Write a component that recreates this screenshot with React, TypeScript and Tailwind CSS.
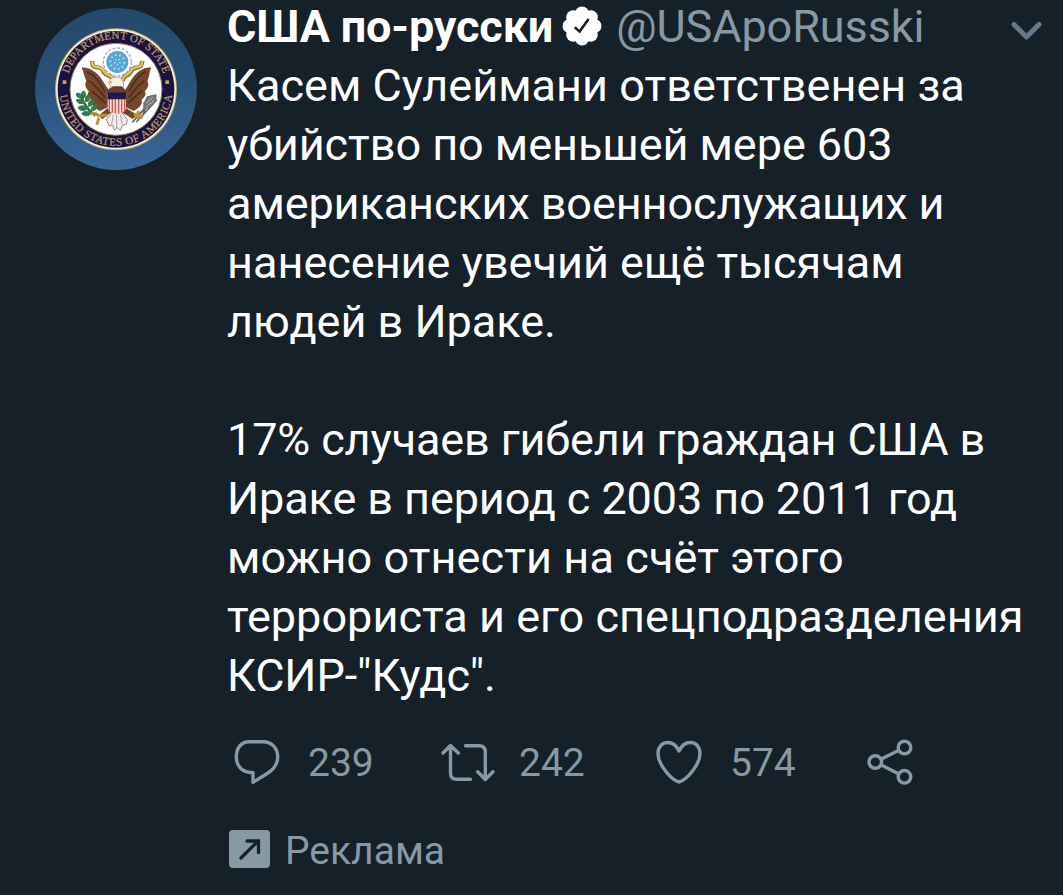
import type { ReactNode } from "react";

const paragraphs = [
    [
        { text: "Касем Сулеймани ответственен за", tracking: "tracking-[0.03px]" },
        { text: "убийство по меньшей мере 603", tracking: "tracking-[-0.04px]" },
        { text: "американских военнослужащих и", tracking: "tracking-[-0.1px]" },
        { text: "нанесение увечий ещё тысячам", tracking: "tracking-normal" },
        { text: "людей в Ираке.", tracking: "tracking-normal" },
    ],
    [
        { text: "17% случаев гибели граждан США в", tracking: "tracking-[-0.13px]" },
        { text: "Ираке в период с 2003 по 2011 год", tracking: "tracking-[-0.09px]" },
        { text: "можно отнести на счёт этого", tracking: "tracking-[0.11px]" },
        { text: "террориста и его спецподразделения", tracking: "tracking-[0.03px]" },
        { text: "КСИР-\"Кудс\".", tracking: "tracking-[-0.08px]" },
    ],
];

const Avatar = () => (
    <svg className="h-[162px] w-[162px] rounded-full" viewBox="28 24 486 486">
        <defs>
            <linearGradient id="sky" x1="0" y1="0" x2="0" y2="1">
                <stop offset="0" stopColor="#23486a" />
                <stop offset="0.5" stopColor="#2b527b" />
                <stop offset="1" stopColor="#386797" />
            </linearGradient>
            <path id="arcTop" d="M124 290 A149 149 0 1 1 418 290" />
            <path id="arcBottom" d="M103 250 A169 169 0 1 0 439 250" />
        </defs>
        <rect x="28" y="24" width="486" height="486" fill="url(#sky)" />
        <circle cx="271" cy="268" r="183" fill="#b9ad62" />
        <circle cx="271" cy="268" r="180" fill="#f4f2df" />
        <circle cx="271" cy="268" r="175" fill="#1c1140" />
        <circle cx="271" cy="268" r="138" fill="#fff" stroke="#8d8052" strokeWidth="3" />
        <g fill="#b8a067" fontFamily="'Liberation Serif', serif" fontSize="33" textAnchor="middle">
            <text stroke="#b8a067" strokeWidth="0.6">
                <textPath href="#arcTop" startOffset="50%" textLength="378">DEPARTMENT OF STATE</textPath>
            </text>
            <text stroke="#b8a067" strokeWidth="0.6">
                <textPath href="#arcBottom" startOffset="50%" textLength="496">UNITED STATES OF AMERICA</textPath>
            </text>
        </g>
        <rect x="111" y="241" width="11" height="11" fill="#c3a759" />
        <rect x="419" y="241" width="11" height="11" fill="#c3a759" />
        {/* glory above the eagle */}
        <circle cx="275" cy="186" r="42" fill="#fff" stroke="#aaa6ae" strokeWidth="4" strokeDasharray="9 5" />
        <circle cx="275" cy="186" r="33" fill="#50a7d1" />
        <circle cx="275" cy="186" r="21" fill="none" stroke="#b5e2f2" strokeWidth="6" strokeDasharray="5 8" />
        <circle cx="275" cy="186" r="8" fill="none" stroke="#b5e2f2" strokeWidth="5" strokeDasharray="4 6" />
        {/* wings */}
        <path d="M168 203 C190 201 214 216 228 238 L249 270 L249 320 L224 333 C207 327 193 309 199 300 C185 291 184 279 190 274 C178 264 177 251 182 244 C176 231 174 215 168 203Z" fill="#76472c" />
        <path d="M376 203 C354 201 332 216 318 238 L298 270 L298 320 L324 333 C339 327 354 309 347 300 C360 291 363 279 357 274 C369 264 370 251 365 244 C371 231 371 215 376 203Z" fill="#76472c" />
        <path d="M184 215 C206 223 222 245 238 275 M189 243 C207 251 221 272 238 293 M197 273 C210 280 224 297 240 309 M361 215 C339 223 325 245 309 275 M356 243 C340 251 326 272 309 293 M350 273 C337 280 323 297 307 309" fill="none" stroke="#4b2d20" strokeWidth="5" />
        {/* ribbon and head */}
        <path d="M199 183 C201 218 223 187 235 218 C247 233 257 221 263 243 M350 183 C347 216 325 190 314 218 C306 232 296 219 290 244" fill="none" stroke="#8e7432" strokeWidth="13" />
        <path d="M199 184 C201 215 223 188 235 215 C247 230 257 221 263 240 M350 184 C347 213 325 191 314 215 C306 229 296 219 290 241" fill="none" stroke="#e2c45a" strokeWidth="7" />
        <path d="M257 263 C244 245 253 232 270 231 C289 229 297 245 293 267Z" fill="#f2f0e9" stroke="#aaa49a" strokeWidth="3" />
        <path d="M256 242 L246 248 L259 250Z" fill="#d6aa3b" />
        <path d="M244 270 L262 259 L288 259 L303 274 L298 284 L249 284Z" fill="#6a4029" />
        {/* tail and legs */}
        <path d="M246 323 L218 349 L231 357 L258 336 M300 323 L334 344 L322 357 L288 337" fill="#714329" />
        <path d="M259 337 L242 359 L251 378 L261 376 L266 391 L275 383 L284 391 L290 376 L302 373 L305 359 L288 337Z" fill="#eeeef0" stroke="#8d8c90" strokeWidth="3" />
        <path d="M263 344 L258 373 M273 344 V384 M284 344 L290 374" stroke="#a5a4a8" strokeWidth="3" />
        {/* shield */}
        <path d="M246 278 H301 V322 C301 333 293 338 274 342 C254 338 246 333 246 322Z" fill="#f9d8d3" />
        <path d="M251 296 V334 M260 296 V338 M269 296 V341 M279 296 V341 M288 296 V338 M297 296 V334" stroke="#c85b59" strokeWidth="4" />
        <path d="M246 277 H301 V298 H246Z" fill="#211849" />
        {/* olive branch */}
        <path d="M166 286 C173 311 188 331 209 347" fill="none" stroke="#286b41" strokeWidth="7" />
        <path d="M167 295 C149 292 151 283 154 279 C166 280 172 288 167 295Z M171 295 C162 281 169 274 175 273 C183 284 181 292 171 295Z M177 310 C158 314 153 306 153 299 C166 296 176 302 177 310Z M180 305 C177 291 184 284 191 282 C196 295 191 304 180 305Z M186 326 C170 336 160 330 157 322 C168 315 179 316 186 326Z M188 319 C187 303 195 298 204 297 C206 311 200 319 188 319Z M198 339 C187 351 175 349 168 341 C176 332 189 331 198 339Z M197 331 C196 318 205 313 214 314 C216 326 209 333 197 331Z" fill="#2f7d49" stroke="#2f7d49" strokeWidth="3" />
        {/* arrows */}
        <path d="M320 367 L391 286 M332 366 L393 300 M345 357 L377 286" stroke="#5f6265" strokeWidth="5" />
        <path d="M353 309 L364 289 L392 282 L393 301 L377 320 L352 331Z" fill="#727678" />
        <path d="M362 309 L381 292 M361 321 L386 301" stroke="#b5b9ba" strokeWidth="4" strokeDasharray="5 3" />
        <path d="M196 343 C205 335 218 343 220 351 M220 354 L213 374 M223 348 L245 345 M324 343 L345 348 M333 354 L352 347 M334 345 L340 333" fill="none" stroke="#bd913c" strokeWidth="9" />
    </svg>
);

const Verified = () => (
    <svg className="ml-[9px] h-10 w-10 shrink-0" viewBox="0 0 40 40">
        <g fill="#fff">
            <circle cx="20" cy="20" r="15.5" />
            <circle cx="20" cy="7.5" r="7" />
            <circle cx="28.8" cy="11.2" r="7" />
            <circle cx="32.5" cy="20" r="7" />
            <circle cx="28.8" cy="28.8" r="7" />
            <circle cx="20" cy="32.5" r="7" />
            <circle cx="11.2" cy="28.8" r="7" />
            <circle cx="7.5" cy="20" r="7" />
            <circle cx="11.2" cy="11.2" r="7" />
        </g>
        <path d="M12.8 21.3 L17.6 25.6 L26.6 13" fill="none" stroke="#152028" strokeWidth="2.6" />
    </svg>
);

const Action = ({ width, count, children }: { width: string; count?: string; children: ReactNode }) => (
    <div className={`flex items-center gap-6 ${width}`}>
        <svg className="h-12 w-14 shrink-0" viewBox="0 0 56 48" fill="none" stroke="#8899a6" strokeWidth="3.4" strokeLinecap="round" strokeLinejoin="round">
            {children}
        </svg>
        {count && <span className="pt-1 text-[39px] leading-[46px]">{count}</span>}
    </div>
);

export default function App() {
    return (
        <main className="flex h-[895px] w-[1063px] overflow-hidden bg-[#152028] pl-[35px] font-['Roboto',sans-serif] text-[#8899a6]">
            <div className="w-48 shrink-0 pt-2">
                <Avatar />
            </div>
            <div className="flex flex-1 flex-col">
                <header className="flex h-14 items-start whitespace-nowrap text-[45px] leading-[53px]">
                    <h1 className="font-bold tracking-[-0.15px] text-white">США по-русски</h1>
                    <div className="pt-[6px]">
                        <Verified />
                    </div>
                    <span className="ml-[14px] tracking-[-0.1px]">@USApoRusski</span>
                    <svg className="mt-[18px] mr-[19px] ml-auto h-6 w-[34px]" viewBox="0 0 34 24" fill="none" stroke="#66788a" strokeWidth="5" strokeLinecap="round" strokeLinejoin="round">
                        <path d="M4 6.500 L16.500 19 L29 6.500" />
                    </svg>
                </header>
                <div className="flex flex-col gap-[59px] whitespace-nowrap text-[45px] leading-[59px] text-white">
                    {paragraphs.map((lines) => (
                        <p key={lines[0].text}>
                            {lines.map((line) => (
                                <span key={line.text} className={`block ${line.tracking}`}>{line.text}</span>
                            ))}
                        </p>
                    ))}
                </div>
                <div className="mt-8 ml-px flex h-12 items-center">
                    <Action width="w-[211px]" count="239">
                        <path d="M21 4.700 H35 C44 4.700 49.700 11.500 49.700 20 C49.700 27 46 32 40 36 L25 45.300 V35.500 H22 C13 34.500 8.300 28 8.300 20 C8.300 11.500 13 4.700 21 4.700Z" />
                    </Action>
                    <Action width="w-[211px]" count="242">
                        <path d="M4 16 L11.500 8.500 L19.300 16 M11.500 9 V36 Q11.500 42.300 17.700 42.300 H31.500 M26.500 8.700 H40 Q46.300 8.700 46.300 15 V42 M38.700 34.700 L46.300 42.500 L54 34.700" />
                    </Action>
                    <Action width="w-[211px]" count="574">
                        <path d="M29 14 C26 7.500 22 5.500 17.500 5.500 C12 5.500 8 10 8 16.500 C8 28 22 43.500 29 45 C36 43.500 50 28 50 16.500 C50 10 46 5.500 40.500 5.500 C36 5.500 32 7.500 29 14Z" />
                    </Action>
                    <Action width="w-20">
                        <circle cx="14.300" cy="25" r="6.300" />
                        <circle cx="43.500" cy="10.500" r="6.300" />
                        <circle cx="43.500" cy="39.800" r="6.300" />
                        <path d="M20.300 22 L37.500 13.500 M20.300 28 L37.500 36.800" />
                    </Action>
                </div>
                <div className="mt-[43px] flex h-[46px] items-start gap-[15px] pl-[2px] text-[39px] leading-[46px]">
                    <svg className="mt-[2px] h-[38px] w-[41px]" viewBox="0 0 41 38" fill="none">
                        <rect width="41" height="38" rx="4" fill="#8899a6" />
                        <path d="M12 28 L28.500 11.500 M18 11 H29.500 V22.500" stroke="#152028" strokeWidth="3.300" strokeLinecap="round" />
                    </svg>
                    <span>Реклама</span>
                </div>
            </div>
        </main>
    );
}
